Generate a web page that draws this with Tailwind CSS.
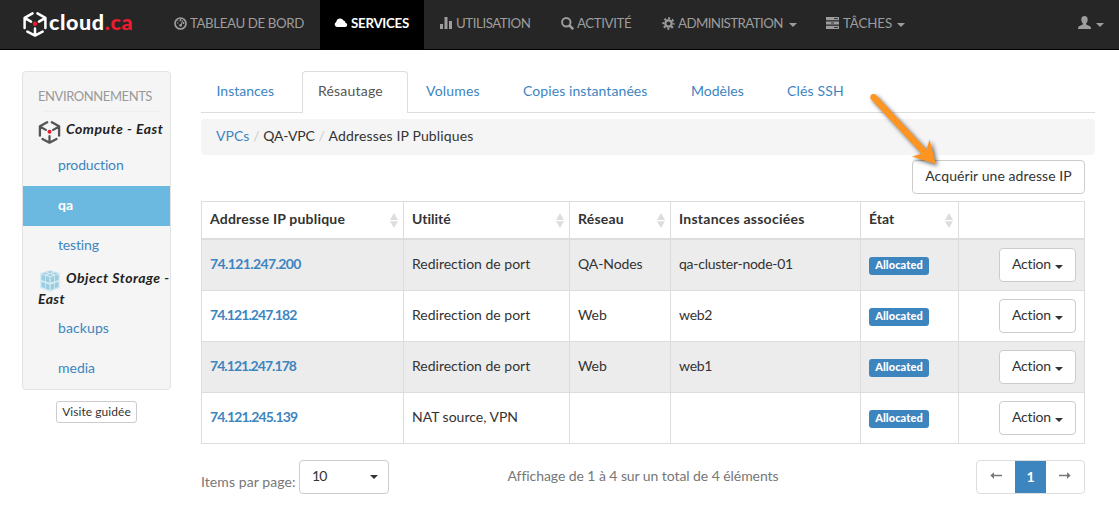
<!DOCTYPE html>
<html lang="fr">
<head>
<meta charset="utf-8">
<title>cloud.ca</title>
<script src="https://cdn.jsdelivr.net/npm/@tailwindcss/browser@4"></script>
</head>
<body class="h-[510px] w-[1119px] overflow-hidden bg-white font-['Lato',sans-serif] text-[14px] leading-5 text-[#333] [font-variant-ligatures:none]">
<svg class="hidden">
  <symbol id="cube" viewBox="0 0 24 26">
    <g fill="none" stroke="currentColor" stroke-width="2.500" stroke-linecap="round" stroke-linejoin="round">
      <path d="M9.500 2.400 1.600 6.800V17M14.500 2.400l7.900 4.400V17M2 7.200l6 3.500M22 7.200l-6 3.500M4.400 20.600 12 24.600l7.600-4M12 24V17.500"/>
    </g>
    <circle cx="12" cy="12.700" r="2.200" fill="#ee1c2e"/>
  </symbol>
  <symbol id="sort" viewBox="0 0 8 15"><path d="M4 0l4 7H0zM0 8.200h8L4 15z" fill="#ddd"/></symbol>
</svg>

<nav class="flex h-[50px] border-b border-black bg-[#262626] text-[13.3px] text-[#9d9d9d]">
  <a class="flex w-[159px] pl-[23px] text-white">
    <svg class="mt-[11px] h-[26px] w-6 shrink-0"><use href="#cube"/></svg>
    <span class="ml-[2px] mt-[7px] text-[21.5px] leading-[30px] font-black tracking-[0.6px]">cloud<span class="text-[#ee1c2e]">.ca</span></span>
  </a>
  <a class="flex w-[161px] pt-[13px] pl-[15px]">
    <svg class="mt-[4px] mr-[3px] size-[13px] shrink-0" viewBox="0 0 13 13"><circle cx="6.500" cy="6.500" r="5.500" fill="none" stroke="currentColor" stroke-width="1.700"/><path d="M3 6h1.300M4 3.500l.8.8M6 2.500h1v1.300H6zM9 5.500h1v1H9zM8.700 3.300 6.900 8.500" stroke="currentColor" fill="none"/><circle cx="6.600" cy="8.300" r="1.400" fill="currentColor"/></svg>
    <span class="tracking-[-0.4px] whitespace-nowrap">TABLEAU DE BORD</span>
  </a>
  <a class="flex w-[104px] bg-black pt-[13px] pl-[14px] text-white">
    <svg class="mt-[5px] mr-[3px] h-[10px] w-[14px]" viewBox="0 0 14 10"><path fill="currentColor" d="M3 9A2.700 2.700 0 0 1 2.200 3.900 3.900 3.900 0 0 1 9.500 2.600 2.300 2.300 0 0 1 11.500 4.700 2.200 2.200 0 0 1 11.500 9z"/></svg>
    <span class="font-bold tracking-[-0.27px]">SERVICES</span>
  </a>
  <a class="flex w-[121px] pt-[13px] pl-[16px]">
    <svg class="mt-[4px] mr-[4px] h-[12px] w-[12px]" viewBox="0 0 12 12" fill="currentColor"><path d="M0 7h3v5H0zM4.500 0h3v12h-3zM9 4h3v8H9z"/></svg>
    <span class="tracking-[-0.45px]">UTILISATION</span>
  </a>
  <a class="flex w-[101px] pt-[13px] pl-[16px]">
    <svg class="mt-[4px] mr-[3px] size-[13px]" viewBox="0 0 13 13" fill="none" stroke="currentColor"><circle cx="5.300" cy="5.300" r="4.200" stroke-width="2"/><path d="m8.500 8.500 3.700 3.700" stroke-width="2.500"/></svg>
    <span class="tracking-[-0.4px]">ACTIVITÉ</span>
  </a>
  <a class="flex w-[164px] pt-[13px] pl-[16px]">
    <svg class="mt-[4px] mr-[3px] size-[13px]" viewBox="0 0 13 13" fill="none" stroke="currentColor"><circle cx="6.500" cy="6.500" r="3.200" stroke-width="2.200"/><circle cx="6.500" cy="6.500" r="5.200" stroke-width="2" stroke-dasharray="2.040 2.040" stroke-dashoffset="1.020"/></svg>
    <span class="tracking-[-0.58px]">ADMINISTRATION</span>
    <i class="mt-[10px] ml-[6px] h-0 border-x-4 border-t-4 border-x-transparent border-t-current"></i>
  </a>
  <a class="flex w-[120px] pt-[13px] pl-[16px]">
    <svg class="mt-[4px] mr-[4px] h-[12px] w-[13px]" viewBox="0 0 13 12"><path fill="currentColor" d="M0 0h13v3.200H0zM0 4.400h13v3.200H0zM0 8.800h13V12H0z"/><path stroke="#333" d="M8 1.600h4M5 6h3M8 10.400h4"/></svg>
    <span class="tracking-[-0.1px]">TÂCHES</span>
    <i class="mt-[10px] ml-[5px] h-0 border-x-4 border-t-4 border-x-transparent border-t-current"></i>
  </a>
  <a class="ml-auto flex pt-[16px] pr-[15px]">
    <svg class="h-[13px] w-[13px]" viewBox="0 0 13 13"><path fill="currentColor" d="M6.500 0C8.600 0 9.700 1.400 9.700 3.400 9.700 5 9 6.500 8.200 7.300V8.500L11.500 9.900C12.500 10.400 13 11.100 13 13H0C0 11.100.5 10.400 1.500 9.900L4.800 8.500V7.300C4 6.500 3.300 5 3.300 3.400 3.300 1.400 4.400 0 6.500 0z"/></svg>
    <i class="mt-[7px] ml-[5px] h-0 border-x-4 border-t-4 border-x-transparent border-t-current"></i>
  </a>
</nav>

<div class="flex pt-[21px] pl-[22px]">
  <aside class="w-[149px] shrink-0">
    <div class="h-[319px] rounded border border-[#e3e3e3] bg-[#f5f5f5]">
      <div class="pt-[14px] pl-[15px] text-[13px] tracking-[-0.42px] text-[#999]">ENVIRONNEMENTS</div>
      <div class="mr-[9px] ml-[20px] mt-[5px] h-px bg-[#eee]"></div>
      <div class="mt-[7px] flex h-[27px] pl-[15px] text-[#222]">
        <svg class="mt-px h-[24px] w-[23px] text-[#555]"><use href="#cube"/></svg>
        <span class="ml-[5px] font-bold italic tracking-[0.52px] whitespace-nowrap">Compute - East</span>
      </div>
      <a class="block h-10 pt-[9px] pl-[35px] tracking-[-0.15px] text-[#3d85bf]">production</a>
      <a class="block h-10 bg-[#6bb9e0] pt-[9px] pl-[35px] font-bold text-white">qa</a>
      <a class="block h-10 pt-[9px] pl-[35px] tracking-[-0.15px] text-[#3d85bf]">testing</a>
      <div class="flex h-[21px] pt-[3px] pl-[17px] text-[#222]">
        <svg class="mt-px h-[22px] w-[20px] shrink-0" viewBox="0 0 20 22"><path fill="#d5eaf1" d="M10 0 20 3v15l-10 4L0 18V3z"/><g fill="#9bcde0"><path d="M10 1l3 1-3 1-3-1zM5 2.500l3 1-3 1-3-1zM15 2.500l3 1-3 1-3-1zM10 4l3 1-3 1-3-1z"/><path d="M1.500 4.500 5 5.600v5.600L1.500 10zM5.800 6l3.600 1v5.500L5.800 11.500zM10.600 7l3.600-1v5.500l-3.600 1zM15 5.600l3.500-1.100V10L15 11.200zM1.500 12 5 13v5.200L1.500 17zM5.800 13.400l3.600 1V20l-3.600-1.200zM10.600 14.400l3.600-1v5.400L10.600 20zM15 13l3.500-1v5L15 18.200z"/></g></svg>
        <span class="ml-[6px] -mt-px font-bold italic tracking-[0.5px] whitespace-nowrap">Object Storage -</span>
      </div>
      <div class="h-[22px] pt-[2px] pl-[15px] font-bold tracking-[0.4px] text-[#222] italic">East</div>
      <a class="block h-10 pt-[9px] pl-[35px] tracking-[0.1px] text-[#3d85bf]">backups</a>
      <a class="block h-10 pt-[9px] pl-[35px] text-[#3d85bf]">media</a>
    </div>
    <button class="mt-[11px] ml-[34px] block h-[22px] w-[81px] rounded-[3px] border border-[#ccc] text-[12px] leading-[20px] tracking-[0.05px] whitespace-nowrap">Visite guidée</button>
  </aside>

  <main class="relative ml-[30px] w-[894px]">
    <div class="flex h-[42px] border-b border-[#ddd] text-[#3d85bf]">
      <a class="w-[101px] pt-[10px] pl-[15.5px]">Instances</a>
      <a class="h-[42px] w-[106px] rounded-t border border-b-0 border-[#ddd] bg-white pt-[9px] pl-[15px] tracking-[0.2px] text-[#555]">Résautage</a>
      <a class="w-[97px] pt-[10px] pl-[18px] tracking-[0.2px]">Volumes</a>
      <a class="w-[168px] pt-[10px] pl-[18px] tracking-[0.08px]">Copies instantanées</a>
      <a class="w-[96px] pt-[10px] pl-[18px]">Modèles</a>
      <a class="pt-[10px] pl-[18px] tracking-[0.15px]">Clés SSH</a>
    </div>
    <div class="mt-[6px] flex h-[36px] rounded bg-[#f5f5f5] pt-[7px] pl-[15px]">
      <span class="text-[#3d85bf]">VPCs</span><span class="w-[14px] pl-[4px] text-[#ccc]">/</span>
      <span class="tracking-[-0.2px]">QA-VPC</span><span class="w-[14px] pl-[4px] text-[#ccc]">/</span>
      <span class="tracking-[0.15px]">Addresses IP Publiques</span>
    </div>
    <button class="mt-[5px] ml-[711px] block h-[34px] w-[173px] rounded border border-[#ccc] bg-white pb-[2px] tracking-[0.08px] whitespace-nowrap">Acquérir une adresse IP</button>

    <div id="grid" class="mt-[7px] w-[884px] border-t border-[#ddd]">
      <div class="grid h-[38px] grid-cols-[202px_166px_101px_190px_98px_127px] border-b-2 border-[#ddd] font-bold [&>div]:flex [&>div]:justify-between [&>div]:border-l [&>div]:border-[#ddd] [&>div]:pt-[7px] [&>div]:pr-[5px] [&>div]:pl-[8px] [&_svg]:mt-[4px] [&_svg]:h-[15px] [&_svg]:w-[8px]">
        <div><span class="tracking-[0.2px]">Addresse IP publique</span><svg><use href="#sort"/></svg></div>
        <div><span>Utilité</span><svg><use href="#sort"/></svg></div>
        <div><span class="tracking-[0.2px]">Réseau</span><svg><use href="#sort"/></svg></div>
        <div><span class="tracking-[0.25px]">Instances associées</span></div>
        <div><span>État</span><svg><use href="#sort"/></svg></div>
        <div class="border-r"></div>
      </div>
    </div>
    <template id="row">
      <div class="grid h-[51px] grid-cols-[202px_166px_101px_190px_98px_127px] border-b border-[#ddd] odd:bg-white even:bg-[#ececec] [&>div]:border-l [&>div]:border-[#ddd] [&>div]:pt-[14px] [&>div]:pl-[8px]">
        <div class="font-bold text-[#3d85bf]"></div>
        <div></div>
        <div class="tracking-[-0.1px]"></div>
        <div class="tracking-[-0.26px]"></div>
        <div><span class="mt-[3px] block h-[18px] w-[60px] rounded-[3px] bg-[#3d85bf] text-center text-[11px] leading-[16px] font-black tracking-[0.1px] text-white">Allocated</span></div>
        <div class="border-r"><button class="-mt-[6px] ml-[32px] flex h-[34px] w-[77px] rounded border border-[#ccc] bg-white pt-[5px] pl-[12px] tracking-[-0.2px]">Action<i class="mt-[11px] ml-[4px] h-0 border-x-4 border-t-4 border-x-transparent border-t-[#333]"></i></button></div>
      </div>
    </template>

    <div class="mt-[16px] flex text-[#777]">
      <span class="w-[98px] pt-[12px] tracking-[0.08px] whitespace-nowrap">Items par page:</span>
      <div class="flex h-[34px] w-[90px] justify-between rounded border border-[#ccc] pt-[5px] pr-[10px] pl-[12px] text-[#333]"><span class="tracking-[-0.8px]">10</span><i class="mt-[9px] h-0 border-x-4 border-t-4 border-x-transparent border-t-[#333]"></i></div>
      <span class="w-[468px] pt-[6px] pl-[118.5px] tracking-[-0.07px] whitespace-nowrap">Affichage de 1 à 4 sur un total de 4 éléments</span>
      <div class="ml-[119px] flex h-[34px] w-[109px] shrink-0 overflow-hidden rounded border border-[#ddd]">
        <span class="w-[38px] pt-[10px] pl-[13px]"><svg class="h-[9px] w-[12px]" viewBox="0 0 12 9"><path d="M4 1.200.3 4.500 4 7.800z" fill="currentColor"/><path d="M2 4.500h10" stroke="currentColor" stroke-width="1.300"/></svg></span>
        <span class="-my-px w-[31px] bg-[#3d85bf] pt-[7px] text-center font-bold text-white">1</span>
        <span class="pt-[10px] pl-[13px]"><svg class="h-[9px] w-[12px]" viewBox="0 0 12 9"><path d="m8 1.200 3.700 3.300L8 7.800z" fill="currentColor"/><path d="M0 4.500h10" stroke="currentColor" stroke-width="1.300"/></svg></span>
      </div>
    </div>

    <svg class="absolute top-[16px] left-[662px] h-[90px] w-[85px] drop-shadow-[2px_2px_2px_rgba(0,0,0,0.6)]" viewBox="863 87 85 90"><path fill="#ff9421" d="M870.600 98.700Q869.500 95.500 872 94.300 874.300 93.200 876 95L926.500 149.500 929.600 139.500 935.800 164 912 156.500 921.500 153.700z"/></svg>
  </main>
</div>
<script>
const rows = [
  ["74.121.247.200", "Redirection de port", "QA-Nodes", "qa-cluster-node-01", "-0.6px"],
  ["74.121.247.182", "Redirection de port", "Web", "web2", "-0.92px"],
  ["74.121.247.178", "Redirection de port", "Web", "web1", "-0.95px"],
  ["74.121.245.139", "NAT source, VPN", "", "", "-0.85px"]
];
const grid = document.getElementById("grid");
for (const r of rows) {
  const row = document.getElementById("row").content.firstElementChild.cloneNode(true);
  r.slice(0, 4).forEach((t, i) => row.children[i].textContent = t);
  row.children[0].style.letterSpacing = r[4];
  grid.append(row);
}
</script>
</body>
</html>
